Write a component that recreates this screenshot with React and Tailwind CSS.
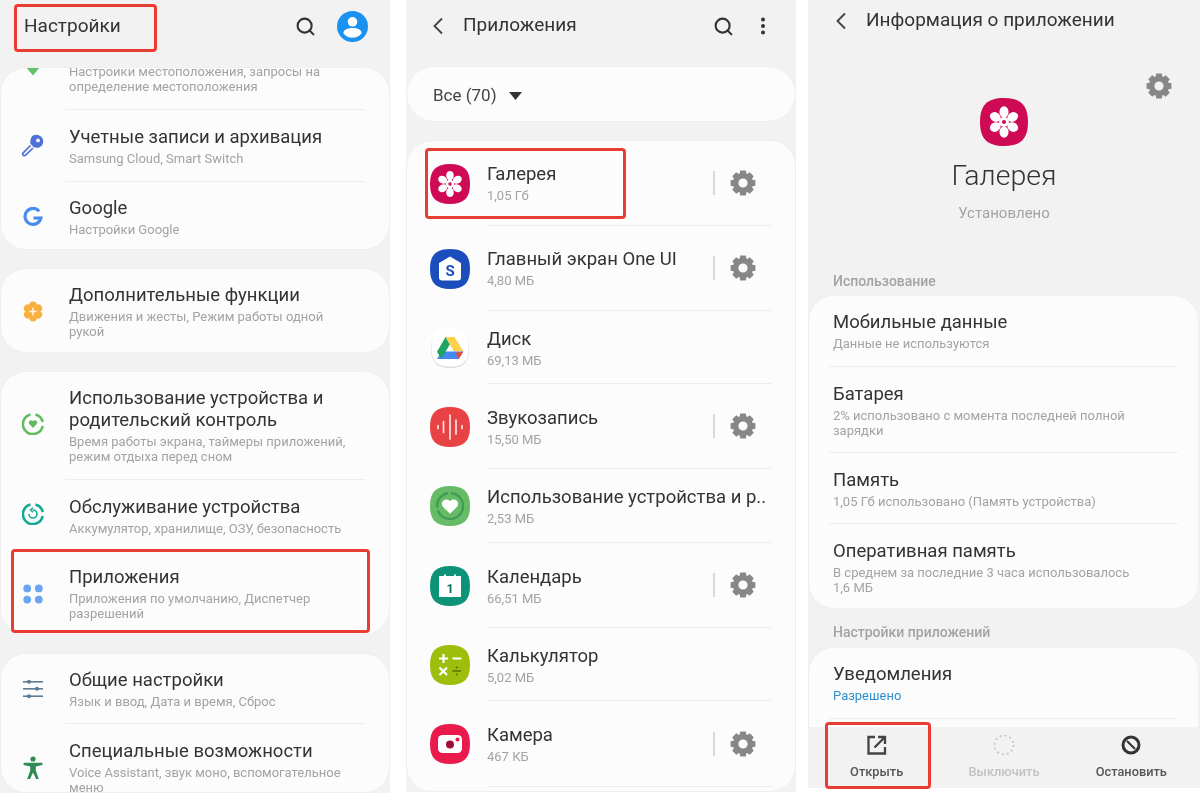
import React from "react";
import { Search } from "lucide-react";

const Sq = ({ fill, size = 40, children, shadow }) => (
  <svg width={size} height={size} viewBox="0 0 40 40" className="shrink-0">
    {shadow && <path d="M20 1.5C33 1.5 39 7 39 21C39 34 33 40 20 40C7 40 1 34 1 21C1 7 7 1.5 20 1.5Z" fill="#d9d9d9" />}
    <path d={shadow ? "M20 .5C33 .5 38.6 6 38.6 20C38.6 33 33 38.8 20 38.8C7 38.8 1.4 33 1.4 20C1.4 6 7 .5 20 .5Z" : "M20 0C34 0 40 6 40 20C40 34 34 40 20 40C6 40 0 34 0 20C0 6 6 0 20 0Z"} fill={fill} />
    {children}
  </svg>
);

const Flower = ({ size = 40 }) => (
  <Sq fill="#cf0a55" size={size}>
    {[0, 60, 120, 180, 240, 300].map((a) => (
      <ellipse key={a} cx="20" cy="11.6" rx="3.800" ry="4.700" fill="#fff" transform={`rotate(${a} 20 20)`} />
    ))}
    <circle cx="20" cy="20" r="4.200" fill="#fff" />
    <circle cx="20" cy="20" r="1.700" fill="#cf0a55" />
  </Sq>
);

const Gear = ({ size = 26 }) => (
  <svg width={size} height={size} viewBox="0 0 26 26" className="shrink-0">
    <circle cx="13" cy="13" r="7.3" fill="none" stroke="#878787" strokeWidth="5.4" />
    {[0, 45, 90, 135, 180, 225, 270, 315].map((a) => (
      <path key={a} d="M10.2 0.6H15.8L16.6 5H9.4Z" fill="#878787" transform={`rotate(${a} 13 13)`} />
    ))}
  </svg>
);

const Chevron = () => (
  <svg width="14" height="20" viewBox="0 0 14 20" className="shrink-0">
    <path d="M11 2.5L3.5 10L11 17.5" fill="none" stroke="#444" strokeWidth="1.9" />
  </svg>
);

const Key = () => (
  <svg width="24" height="24" viewBox="0 0 24 24" className="-mt-[1px]">
    <path d="M9.5 12.5L2.2 19.8a1.7 1.7 0 0 0 2.4 2.4L12 15" fill="none" stroke="#4c70d6" strokeWidth="1.7" />
    <path d="M15 1.8c4 0 7.2 3 7.2 6.4 0 4.2-3.2 6.6-6.400 6.600-1.400 0-2.800-.4-3.800-1.200L9.400 10.600C8.800 5 11.400 1.800 15 1.800Z" fill="#4c70d6" />
    <circle cx="17" cy="7.400" r="1.900" fill="#fcfcfc" />
  </svg>
);
const GIcon = () => (
  <svg width="20" height="20" viewBox="0 0 20 20">
    <path d="M16.2 4.2A8 8 0 1 0 17.9 11H10.5" fill="none" stroke="#4a8bef" strokeWidth="3.2" />
  </svg>
);
const Extra = () => (
  <svg width="20" height="21" viewBox="0 0 20 21">
    {[0, 60, 120, 180, 240, 300].map((a) => (
      <circle key={a} cx="10" cy="4.400" r="3.900" fill="#f8b13f" transform={`rotate(${a} 10 10.500)`} />
    ))}
    <circle cx="10" cy="10.500" r="6.400" fill="#f8b13f" />
    <path d="M10 6.800v7.400M6.300 10.500h7.400" stroke="#fdf3df" strokeWidth="1.700" />
  </svg>
);
const Ring = ({ color, children }) => (
  <svg width="22" height="22" viewBox="0 0 22 22" className="-mt-[4px]">
    <path d="M13.500 1.400A10 10 0 0 1 20.700 9" fill="none" stroke={color} strokeWidth="2.600" />
    <path d="M20.700 13A10 10 0 0 1 3 17.200 10 10 0 0 1 8.500 1.400" fill="none" stroke={color} strokeWidth="2.600" />
    {children}
  </svg>
);
const Heart = ({ x, y, s, fill }) => (
  <path transform={`translate(${x} ${y}) scale(${s})`} d="M5 9L.8 4.800A2.600 2.600 0 0 1 5 1.600 2.600 2.600 0 0 1 9.200 4.800Z" fill={fill} />
);
const Dots = () => (
  <svg width="20" height="20" viewBox="0 0 20 20" fill="#69a6f1" className="mt-[2px]">
    <circle cx="4.200" cy="4.400" r="3.900" /><circle cx="15.800" cy="4.400" r="3.900" />
    <circle cx="4.200" cy="15.600" r="3.900" /><circle cx="15.800" cy="15.600" r="3.900" />
  </svg>
);
const Sliders = () => (
  <svg width="20" height="20" viewBox="0 0 20 20" fill="#5b7c96">
    <rect y="2" width="20" height="1.600" /><rect y="9" width="20" height="1.600" /><rect y="16.400" width="20" height="1.600" />
    <circle cx="6" cy="2.800" r="2" /><circle cx="14" cy="9.800" r="2" /><circle cx="6" cy="17.200" r="2" />
  </svg>
);
const Person = () => (
  <svg width="20" height="24" viewBox="0 0 20 24" fill="#2f8a55">
    <circle cx="10" cy="3" r="2.600" />
    <path d="M.6 6.800h18.800v2.200l-6.600 1.600v4l3 8.400h-2.600L10 16.400 7 23H4.200l3-8.400v-4L.6 9Z" />
  </svg>
);

const Text = ({ title, sub, subClass = "text-[#a3a3a3]" }) => (
  <>
    <div className="text-[18.5px] leading-[22px] text-[#333]">{title}</div>
    {sub && <div className={`text-[13px] leading-[15px] mt-[3px] ${subClass}`}>{sub}</div>}
  </>
);

const Row = ({ icon, title, sub, h }) => (
  <div className="flex items-center" style={{ height: h }}>
    <div className="w-[64px] shrink-0 flex justify-center">{icon}</div>
    <div className="flex-1 self-stretch flex flex-col justify-center min-w-0 ml-[4px] whitespace-nowrap">
      <Text title={title} sub={sub} />
    </div>
  </div>
);

const Divider1 = () => <div className="h-px bg-[#eeeeee] ml-[64px] mr-[24px]" />;

const Card = ({ children, className = "" }) => (
  <div className={`bg-[#fcfcfc] rounded-[26px] overflow-hidden shrink-0 border border-[#efefef] ${className}`}>{children}</div>
);

const apps = [
  { name: "Галерея", size: "1,05 Гб", h: 85, gear: true, tight: true, icon: <Flower /> },
  {
    name: "Главный экран One UI", size: "4,80 МБ", h: 85, gear: true, tight: true,
    icon: (
      <Sq fill="#1b4dbd">
        <path d="M20 7.500L31 14v14.500a3 3 0 0 1-3 3H12a3 3 0 0 1-3-3V14Z" fill="#fff" />
        <text x="20" y="27" textAnchor="middle" fontSize="15" fontWeight="700" fill="#1b4dbd" fontFamily="Roboto">S</text>
      </Sq>
    ),
  },
  {
    name: "Диск", size: "69,13 МБ", h: 73,
    icon: (
      <Sq fill="#ffffff" shadow>
        <path d="M15.500 9H24.500L33.400 23.500H24Z" fill="#ffd04b" />
        <path d="M11.500 23.500H33.400L28.800 31H7Z" fill="#4687f4" />
        <path d="M15.500 9L7 23.700L11.300 31L19.800 16.400Z" fill="#1fa463" />
        <path d="M33.400 23.500L28.800 31L25.300 25Z" fill="#dd5044" />
      </Sq>
    ),
  },
  {
    name: "Звукозапись", size: "15,50 МБ", h: 85, gear: true,
    icon: (
      <Sq fill="#e94245">
        <g stroke="#fde2e2" strokeWidth="1.700" strokeLinecap="round">
          <path d="M8 18.500v3M13.500 14.500v11M20 8v24M26 13v14M32 18.500v3" />
        </g>
      </Sq>
    ),
  },
  {
    name: "Использование устройства и р..", size: "2,53 МБ", h: 74,
    icon: (
      <Sq fill="#66bb66">
        <circle cx="20" cy="20" r="13" fill="none" stroke="#3f9a55" strokeWidth="2.200" strokeDasharray="36 3 20 3" />
        <Heart x={11.500} y={12.500} s={1.700} fill="#fff" />
      </Sq>
    ),
  },
  {
    name: "Календарь", size: "66,51 МБ", h: 85, gear: true,
    icon: (
      <Sq fill="#0d9478">
        <path d="M9 10H14V8.500h2V10H24V8.500h2V10H31V31H9Z" fill="#fff" />
        <text x="20" y="27" textAnchor="middle" fontSize="12.500" fontWeight="700" fill="#0a6d59" fontFamily="Roboto">1</text>
      </Sq>
    ),
  },
  {
    name: "Калькулятор", size: "5,02 МБ", h: 73,
    icon: (
      <Sq fill="#9dbf0b">
        <path d="M9 13.500h9M13.500 9v9M22.500 13.500h9M9.500 22.500l7.500 7.500M17 22.500l-7.500 7.500" stroke="#fff" strokeWidth="2.200" />
        <path d="M22.500 26h8.500" stroke="#58720a" strokeWidth="1.400" />
        <circle cx="26.800" cy="22.500" r="1.100" fill="#58720a" /><circle cx="26.800" cy="29.500" r="1.100" fill="#58720a" />
      </Sq>
    ),
  },
  {
    name: "Камера", size: "467 КБ", h: 86, gear: true,
    icon: (
      <Sq fill="#ea1a4d">
        <rect x="8" y="11" width="24" height="18" rx="4.500" fill="#fff" />
        <circle cx="20" cy="20.500" r="4" fill="#9c0f36" />
        <circle cx="27.500" cy="15.500" r="2" fill="#ea1a4d" />
      </Sq>
    ),
  },
];

const InfoRow = ({ title, sub, h, subClass, tight }) => (
  <div className={`flex flex-col justify-center pl-[24px] pr-[40px] ${tight ? "" : "pt-px"}`} style={{ height: h }}>
    <Text title={title} sub={sub} subClass={subClass} />
  </div>
);

const RedBox = ({ className }) => (
  <div className={`absolute border-[3px] border-[#e93d33] rounded-[4px] pointer-events-none ${className}`} />
);

const BarBtn = ({ icon, label, color }) => (
  <div className="flex-1 flex flex-col items-center justify-start pt-[6px]">
    <div className="h-[24px] flex items-center">{icon}</div>
    <div className="text-[12.8px] leading-[15px] font-medium mt-[7px]" style={{ color }}>{label}</div>
  </div>
);

export default function App() {
  return (
    <div className="relative w-[1200px] h-[801px] bg-white flex items-start overflow-hidden blur-[0.35px]" style={{ fontFamily: "Roboto, 'Noto Sans', sans-serif" }}>
      {/* Panel 1 */}
      <div className="w-[390px] h-[793px] bg-[#f2f2f2] flex flex-col overflow-hidden shrink-0">
        <div className="h-[67px] shrink-0 flex items-center pl-[24px] pr-[22px] pb-[14px]">
          <div className="flex-1 text-[19px] text-[#333]">Настройки</div>
          <Search size={21} strokeWidth={2.4} color="#333" className="mr-[21px] -mt-px" />
          <svg width="31" height="31" viewBox="0 0 31 31">
            <circle cx="15.500" cy="15.500" r="15.500" fill="#1a92f2" />
            <circle cx="15.500" cy="10.800" r="4.800" fill="#fff" />
            <path d="M6.500 22c0-3.200 4-5 9-5s9 1.800 9 5v.5a11.500 11.500 0 0 1-18 0Z" fill="#fff" />
          </svg>
        </div>
        <Card className="h-[183px]">
          <div className="h-[41px] flex overflow-hidden">
            <div className="w-[64px] flex justify-center items-start">
              <svg width="16" height="9" viewBox="0 0 16 9" className="-mt-[1px]"><path d="M1 0H15L8 8.500Z" fill="#5fc265" /></svg>
            </div>
            <div className="ml-[4px] -mt-[4px] text-[13px] leading-[15px] text-[#a3a3a3]">
              Настройки местоположения, запросы на<br />определение местоположения
            </div>
          </div>
          <Divider1 />
          <Row icon={<Key />} title="Учетные записи и архивация" sub="Samsung Cloud, Smart Switch" h={71} />
          <Divider1 />
          <Row icon={<GIcon />} title="Google" sub="Настройки Google" h={69} />
        </Card>
        <div className="h-[18px] shrink-0" />
        <Card className="h-[85px]">
          <Row icon={<Extra />} title="Дополнительные функции" sub={<>Движения и жесты, Режим работы одной<br />рукой</>} h={85} />
        </Card>
        <div className="h-[18px] shrink-0" />
        <Card className="h-[264px]">
          <Row icon={<Ring color="#62bd62"><Heart x={6.500} y={6.800} s={0.900} fill="#62bd62" /></Ring>} title={<>Использование устройства и<br />родительский контроль</>} sub={<>Время работы экрана, таймеры приложений,<br />режим отдыха перед сном</>} h={107} />
          <Divider1 />
          <Row icon={<Ring color="#15a892"><path d="M7 11a4 4 0 1 0 4-4M11 4.800L8.600 7 11 9.200" fill="none" stroke="#15a892" strokeWidth="1.600" /></Ring>} title="Обслуживание устройства" sub="Аккумулятор, хранилище, ОЗУ, безопасность" h={71} />
          <Row icon={<Dots />} title="Приложения" sub={<>Приложения по умолчанию, Диспетчер<br />разрешений</>} h={84} />
        </Card>
        <div className="h-[18px] shrink-0" />
        <Card className="h-[140px]">
          <Row icon={<Sliders />} title="Общие настройки" sub="Язык и ввод, Дата и время, Сброс" h={69} />
          <Divider1 />
          <Row icon={<Person />} title="Специальные возможности" sub={<>Voice Assistant, звук моно, вспомогательное<br />меню</>} h={87} />
        </Card>
      </div>

      {/* Panel 2 */}
      <div className="ml-[16px] w-[390px] h-[792px] bg-[#f2f2f2] flex flex-col overflow-hidden shrink-0">
        <div className="h-[66px] shrink-0 flex items-center pl-[25px] pr-[30px] pb-[14px]">
          <Chevron />
          <div className="flex-1 ml-[18px] text-[19px] text-[#333] -mt-px">Приложения</div>
          <Search size={21} strokeWidth={2.4} color="#333" className="mr-[26px]" />
          <svg width="6" height="18" viewBox="0 0 6 18" fill="#333"><circle cx="3" cy="2.500" r="2" /><circle cx="3" cy="9" r="2" /><circle cx="3" cy="15.500" r="2" /></svg>
        </div>
        <div className="h-[56px] shrink-0 bg-[#fcfcfc] rounded-[28px] border border-[#efefef] flex items-center pl-[26px] pt-[3px]">
          <span className="text-[17px] text-[#444]">Все (70)</span>
          <svg width="13" height="8" viewBox="0 0 13 8" className="ml-[12px]"><path d="M0 0H13L6.500 8Z" fill="#333" /></svg>
        </div>
        <div className="h-[18px] shrink-0" />
        <div className="flex-1 min-h-0 bg-[#fcfcfc] rounded-[26px] overflow-hidden border border-[#efefef]">
          {apps.map((a) => (
            <div key={a.name} style={{ height: a.h }} className="flex items-center pl-[23px]">
              {a.icon}
              <div className="ml-[17px] flex-1 self-stretch flex items-center border-b border-[#eeeeee] mr-[23px]">
                <div className={`flex-1 min-w-0 whitespace-nowrap ${a.tight ? "" : "pt-px"}`}>
                  <Text title={a.name} sub={a.size} />
                </div>
                {a.gear && (
                  <>
                    <div className="w-[2px] h-[24px] bg-[#d9d9d9]" />
                    <div className="ml-[15px] mr-[16px]"><Gear /></div>
                  </>
                )}
              </div>
            </div>
          ))}
        </div>
      </div>

      {/* Panel 3 */}
      <div className="ml-[12px] w-[392px] h-[788px] bg-[#f2f2f2] flex flex-col overflow-hidden shrink-0">
        <div className="flex-1 min-h-0 overflow-hidden flex flex-col">
          <div className="h-[42px] shrink-0 flex items-center pl-[26px]">
            <Chevron />
            <div className="ml-[18px] text-[19px] text-[#333] -mt-px">Информация о приложении</div>
          </div>
          <div className="h-[57px] shrink-0 flex justify-end items-end pr-[28px]"><Gear /></div>
          <div className="flex flex-col items-center shrink-0 -mt-[1px]">
            <Flower size={48} />
            <div className="text-[28.5px] leading-[36px] font-light text-[#333] mt-[12px]">Галерея</div>
            <div className="text-[15px] leading-[18px] text-[#a3a3a3] mt-[10px]">Установлено</div>
          </div>
          <div className="shrink-0 pl-[25px] text-[14px] leading-[16px] font-medium text-[#a3a3a3] mt-[51px]">Использование</div>
          <Card className="mt-[6px] h-[314px] mr-[1px]">
            <InfoRow tight title="Мобильные данные" sub="Данные не используются" h={70} />
            <div className="h-px bg-[#eeeeee] mx-[20px]" />
            <InfoRow title="Батарея" sub={<>2% использовано с момента последней полной<br />зарядки</>} h={85} />
            <div className="h-px bg-[#eeeeee] mx-[20px]" />
            <InfoRow title="Память" sub="1,05 Гб использовано (Память устройства)" h={70} />
            <div className="h-px bg-[#eeeeee] mx-[20px]" />
            <InfoRow title="Оперативная память" sub={<>В среднем за последние 3 часа использовалось<br />1,6 МБ</>} h={85} />
          </Card>
          <div className="shrink-0 pl-[25px] text-[14px] leading-[16px] font-medium text-[#a3a3a3] mt-[15px]">Настройки приложений</div>
          <Card className="mt-[7px] h-[120px] mr-[1px]">
            <InfoRow tight title="Уведомления" sub="Разрешено" h={70} subClass="text-[#2f8fcf]" />
            <div className="h-px bg-[#eeeeee] mx-[20px]" />
          </Card>
        </div>
        <div className="h-[61px] shrink-0 flex px-[5px] bg-[#f2f2f2]">
          <BarBtn
            color="#555"
            label="Открыть"
            icon={
              <svg width="20" height="20" viewBox="0 0 20 20" fill="none" stroke="#444" strokeWidth="2.300">
                <path d="M8 2H1.500V18.500H18V12" />
                <path d="M7.500 12.500L17.500 2.500M11 2H18V9" />
              </svg>
            }
          />
          <BarBtn
            color="#c2c2c2"
            label="Выключить"
            icon={
              <svg width="22" height="22" viewBox="0 0 22 22" fill="none" stroke="#c2c2c2" strokeWidth="1.600" strokeDasharray="2 3">
                <circle cx="11" cy="11" r="9.500" />
              </svg>
            }
          />
          <BarBtn
            color="#555"
            label="Остановить"
            icon={
              <svg width="20" height="20" viewBox="0 0 20 20" fill="none" stroke="#333" strokeWidth="3">
                <circle cx="10" cy="10" r="8" />
                <path d="M6 6L14 14" strokeWidth="2.200" />
              </svg>
            }
          />
        </div>
      </div>

      <RedBox className="left-[14px] top-[4px] w-[143px] h-[48px]" />
      <RedBox className="left-[11px] top-[549px] w-[359px] h-[84px]" />
      <RedBox className="left-[425px] top-[148px] w-[201px] h-[71px]" />
      <RedBox className="left-[825px] top-[722px] w-[106px] h-[67px]" />
    </div>
  );
}
